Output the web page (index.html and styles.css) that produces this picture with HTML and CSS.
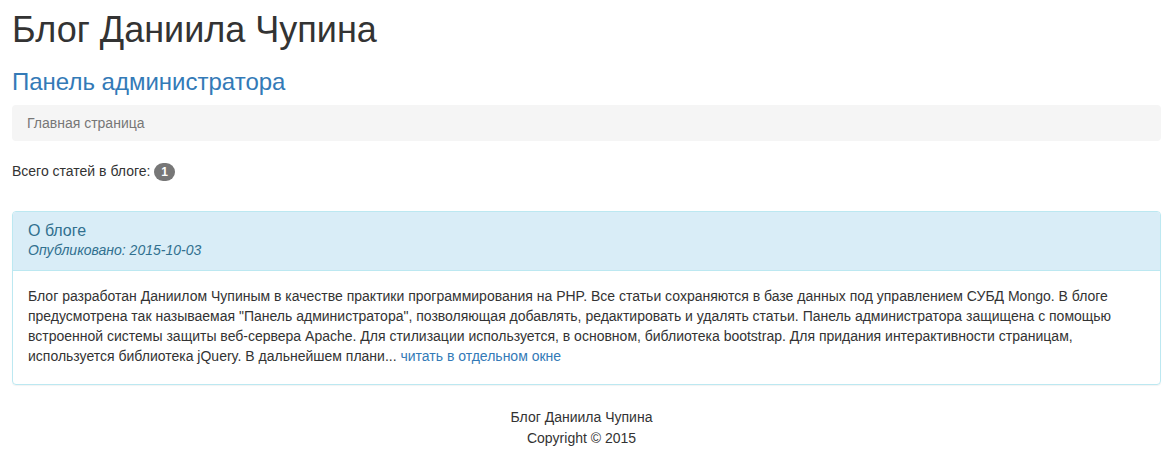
FILE: index.html
```html
<!DOCTYPE html>
<html lang="ru">
<head>
<meta charset="utf-8">
<title>Блог Даниила Чупина</title>
<link rel="stylesheet" href="styles.css">
</head>
<body>
<div class="container">
  <h1 class="site-title">Блог Даниила Чупина</h1>
  <h2 class="section-title"><a href="#">Панель администратора</a></h2>
  <ol class="breadcrumb"><li class="active">Главная страница</li></ol>
  <p class="count">Всего статей в блоге: <span class="badge">1</span></p>
  <div class="panel">
    <div class="panel-heading">
      <h3 class="panel-title">О блоге</h3>
      <div class="panel-date">Опубликовано: 2015-10-03</div>
    </div>
    <div class="panel-body">
      Блог разработан Даниилом Чупиным в качестве практики программирования на PHP. Все статьи сохраняются в базе данных под управлением СУБД Mongo. В блоге предусмотрена так называемая "Панель администратора", позволяющая добавлять, редактировать и удалять статьи. Панель администратора защищена с помощью встроенной системы защиты веб-сервера Apache. Для стилизации используется, в основном, библиотека bootstrap. Для придания интерактивности страницам, используется библиотека jQuery. В дальнейшем плани... <a href="#">читать в отдельном окне</a>
    </div>
  </div>
  <footer class="footer">Блог Даниила Чупина<br>Copyright © 2015</footer>
</div>
</body>
</html>
```

FILE: styles.css
```css
* { box-sizing: border-box; }
html, body { margin: 0; padding: 0; }
body {
  font-family: "Liberation Sans", Arial, sans-serif;
  font-size: 14px;
  line-height: 20px;
  color: #333;
  background: #fff;
}
a { color: #337ab7; text-decoration: none; }
.container { padding: 0 12px; }
.site-title {
  font-size: 36px;
  font-weight: 500;
  line-height: 1.1;
  margin: 10px 0 0;
}
.section-title {
  font-size: 24px;
  font-weight: 500;
  line-height: 1.1;
  margin: 19px 0 10px;
}
.breadcrumb {
  list-style: none;
  margin: 0 0 20px;
  padding: 8px 15px;
  background: #f5f5f5;
  border-radius: 4px;
}
.breadcrumb .active { color: #777; }
.count { margin: 0 0 30px; }
.badge {
  display: inline-block;
  min-width: 10px;
  padding: 3px 7px;
  font-size: 12px;
  font-weight: bold;
  line-height: 1;
  color: #fff;
  text-align: center;
  vertical-align: middle;
  background: #777;
  border-radius: 10px;
}
.panel {
  border: 1px solid #bce8f1;
  border-radius: 4px;
  margin-bottom: 22px;
  box-shadow: 0 1px 1px rgba(0,0,0,.05);
}
.panel-heading {
  padding: 10px 15px;
  background: #d9edf7;
  color: #31708f;
  border-bottom: 1px solid #bce8f1;
  border-radius: 3px 3px 0 0;
}
.panel-title {
  margin: 0;
  font-size: 16px;
  font-weight: 500;
  line-height: 1.1;
}
.panel-date { font-style: italic; }
.panel-body { padding: 15px 15px 18px; }
.footer { text-align: center; line-height: 21px; padding-right: 10px; }
```
